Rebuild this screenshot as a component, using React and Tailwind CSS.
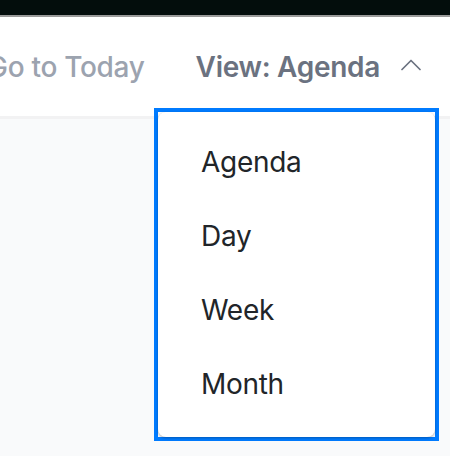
import React from 'react';

const ChevronUp = () => (
  <svg width="20" height="12" viewBox="0 0 20 12" fill="none" stroke="currentColor" strokeWidth="1.7" strokeLinecap="round" strokeLinejoin="round">
    <path d="M1 10.5L10 1.5l9 9" />
  </svg>
);

const views = ['Agenda', 'Day', 'Week', 'Month'];

const App = () => {
  return (
    <div className="w-[450px] h-[456px] overflow-hidden bg-[#f9fafb]" style={{ fontFamily: 'Inter, "Noto Sans", sans-serif' }}>
      <div className="h-[15px] bg-[#030d0c]" />
      <div className="h-[2px] bg-[#9a9a9a]" />
      <div className="relative h-[102px] bg-white border-b-[3px] border-[#f2f2f3] flex items-center justify-end pr-[29px]">
        <span className="text-[28px] font-medium text-[#9ca3af] tracking-[-0.3px] mr-[51px] whitespace-nowrap">Go to Today</span>
        <button className="flex items-center text-[28px] font-semibold text-[#6b7280] tracking-[-0.3px] whitespace-nowrap">
          View: Agenda
          <span className="ml-[21px] -mt-[3px] text-[#6b7280]"><ChevronUp /></span>
        </button>
        <div className="absolute left-[154px] top-[91px] w-[285px] h-[333px] border-4 border-[#007bff]">
          <div className="h-full bg-white rounded-lg shadow-[0_1px_3px_rgba(0,0,0,0.3)] flex flex-col pt-[13px]">
            {views.map((v) => (
              <div key={v} className="h-[74px] flex items-center pl-[43px] text-[28px] text-[#212529] tracking-[-0.3px]">
                {v}
              </div>
            ))}
          </div>
        </div>
      </div>
    </div>
  );
};

export default App;
